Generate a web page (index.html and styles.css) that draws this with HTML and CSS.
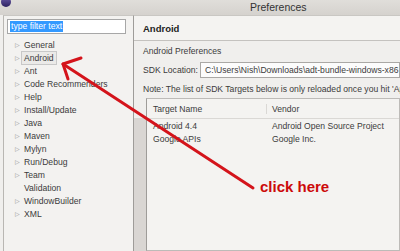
FILE: index.html
```html
<!DOCTYPE html>
<html lang="en">
<head>
    <meta charset="UTF-8" />
    <title>Preferences</title>
    <link rel="stylesheet" href="styles.css">
</head>
<body>
    <div class="window">
        <div class="titlebar">
            <span class="app-icon"></span>
            <span class="title">Preferences</span>
        </div>
        <div class="panes">
            <div class="sidebar">
                <div class="filter"><span class="filter-text">type filter text</span></div>
                <ul class="tree">
                    <li><span class="twisty">&#9655;</span><span class="label">General</span></li>
                    <li class="selected"><span class="twisty">&#9655;</span><span class="label">Android</span></li>
                    <li><span class="twisty">&#9655;</span><span class="label">Ant</span></li>
                    <li><span class="twisty">&#9655;</span><span class="label">Code Recommenders</span></li>
                    <li><span class="twisty">&#9655;</span><span class="label">Help</span></li>
                    <li><span class="twisty">&#9655;</span><span class="label">Install/Update</span></li>
                    <li><span class="twisty">&#9655;</span><span class="label">Java</span></li>
                    <li><span class="twisty">&#9655;</span><span class="label">Maven</span></li>
                    <li><span class="twisty">&#9655;</span><span class="label">Mylyn</span></li>
                    <li><span class="twisty">&#9655;</span><span class="label">Run/Debug</span></li>
                    <li><span class="twisty">&#9655;</span><span class="label">Team</span></li>
                    <li><span class="twisty"></span><span class="label">Validation</span></li>
                    <li><span class="twisty">&#9655;</span><span class="label">WindowBuilder</span></li>
                    <li><span class="twisty">&#9655;</span><span class="label">XML</span></li>
                </ul>
            </div>
            <div class="main">
                <div class="page-header">Android</div>
                <div class="page-body">
                    <p class="section">Android Preferences</p>
                    <div class="sdk-row">
                        <span class="sdk-label">SDK Location:</span>
                        <div class="sdk-input">C:\Users\Nish\Downloads\adt-bundle-windows-x86</div>
                    </div>
                    <p class="note">Note: The list of SDK Targets below is only reloaded once you hit 'Apply' or 'OK'.</p>
                    <div class="table-area">
                        <div class="sash"></div>
                        <div class="targets">
                            <div class="targets-head">
                                <div class="col-name">Target Name</div>
                                <div class="col-vendor">Vendor</div>
                            </div>
                            <div class="targets-row">
                                <div class="col-name">Android 4.4</div>
                                <div class="col-vendor">Android Open Source Project</div>
                            </div>
                            <div class="targets-row">
                                <div class="col-name">Google APIs</div>
                                <div class="col-vendor">Google Inc.</div>
                            </div>
                        </div>
                    </div>
                </div>
            </div>
        </div>

        <!-- annotation drawn on top of the screenshot -->
        <svg class="annotation" width="400" height="251" viewBox="0 0 400 251">
            <path d="M253 188 L63 64" stroke="#d4141b" stroke-width="3" fill="none" stroke-linecap="round" />
            <path d="M81 58 L63 64 L68 79" stroke="#d4141b" stroke-width="3" fill="none" stroke-linecap="round" stroke-linejoin="round" />
        </svg>
        <span class="callout">click here</span>
    </div>
</body>
</html>
```

FILE: styles.css
```css
* {
    margin: 0;
    padding: 0;
    box-sizing: border-box;
}

body {
    background-color: #f0efed;
    font-family: "Liberation Sans", Arial, sans-serif;
    font-size: 8.6px;
    color: #3b3b3b;
    overflow: hidden;
}

.window {
    position: relative;
    width: 400px;
    height: 251px;
    display: flex;
    flex-direction: column;
    overflow: hidden;
}

.titlebar {
    height: 15px;
    background: linear-gradient(#e0deda, #d5d2ce);
    display: flex;
    align-items: center;
    position: relative;
    flex-shrink: 0;
}

.app-icon {
    position: absolute;
    left: 1px;
    top: -3px;
    width: 10px;
    height: 10px;
    border-radius: 50%;
    background: linear-gradient(#6a5aa8, #2c2260);
}

.title {
    margin-left: 250px;
    font-size: 10.5px;
    color: #333;
    line-height: 15px;
}

.panes {
    flex: 1;
    display: flex;
    min-height: 0;
}

.sidebar {
    width: 130px;
    flex-shrink: 0;
    margin-left: 3px;
    border-left: 1px solid #b9b7b3;
    border-top: 1px solid #c9c7c3;
    background-color: #f3f2f0;
    padding: 3px 0 0 3px;
}

.filter {
    width: 119px;
    height: 15px;
    border: 1px solid #a7a7a7;
    background-color: #fff;
    padding: 1px 0 0 2px;
}

.filter-text {
    display: inline-block;
    background-color: #3399ff;
    color: #fff;
    line-height: 11px;
    padding: 0 1px;
}

.tree {
    list-style: none;
    margin-top: 4px;
}

.tree li {
    height: 13px;
    display: flex;
    align-items: center;
}

.twisty {
    width: 14px;
    padding-left: 8px;
    font-size: 6px;
    color: #8d8d8d;
}

.label {
    padding: 0 2px;
    line-height: 12px;
    border: 1px solid transparent;
}

.tree li.selected .label {
    border-color: #c8c8c8;
    background-color: #ebeae8;
}

.main {
    flex: 1;
    min-width: 0;
    display: flex;
    flex-direction: column;
    border-left: 1px solid #9e9c99;
    border-top: 1px solid #c9c7c3;
}

.page-header {
    height: 25px;
    background-color: #f4f3f1;
    border-bottom: 1px solid #c4c2bf;
    padding-left: 9px;
    font-weight: bold;
    font-size: 9.5px;
    color: #222;
    line-height: 25px;
}

.page-body {
    flex: 1;
    padding-top: 4px;
    display: flex;
    flex-direction: column;
    white-space: nowrap;
    overflow: hidden;
}

.section {
    margin-left: 9px;
    line-height: 12px;
}

.sdk-row {
    display: flex;
    align-items: center;
    margin: 5px 0 0 9px;
}

.sdk-label {
    width: 57px;
    flex-shrink: 0;
}

.sdk-input {
    flex: 1;
    height: 16px;
    border: 1px solid #aaa8a5;
    background-color: #fcfcfc;
    padding-left: 4px;
    line-height: 14px;
    overflow: hidden;
}

.note {
    margin: 4px 0 0 9px;
    line-height: 14px;
}

.table-area {
    flex: 1;
    display: flex;
    margin-top: 2px;
}

.sash {
    width: 12px;
    margin-top: 20px;
    background-color: #d9d6d3;
}

.targets {
    flex: 1;
    border: 1px solid #bdbbb8;
    border-left-color: #9e9c99;
    background-color: #f4f3f1;
}

.targets-head,
.targets-row {
    display: flex;
}

.targets-head {
    height: 20px;
    align-items: center;
    border-bottom: 1px solid #dad8d5;
}

.targets-head .col-name {
    border-right: 1px solid #dad8d5;
}

.targets-row {
    height: 13px;
    align-items: center;
}

.col-name {
    width: 120px;
    padding-left: 6px;
}

.col-vendor {
    padding-left: 5px;
}

.annotation {
    position: absolute;
    left: 0;
    top: 0;
}

.callout {
    position: absolute;
    left: 260px;
    top: 178px;
    font-size: 15px;
    font-weight: bold;
    color: #cc0a0a;
}
```
